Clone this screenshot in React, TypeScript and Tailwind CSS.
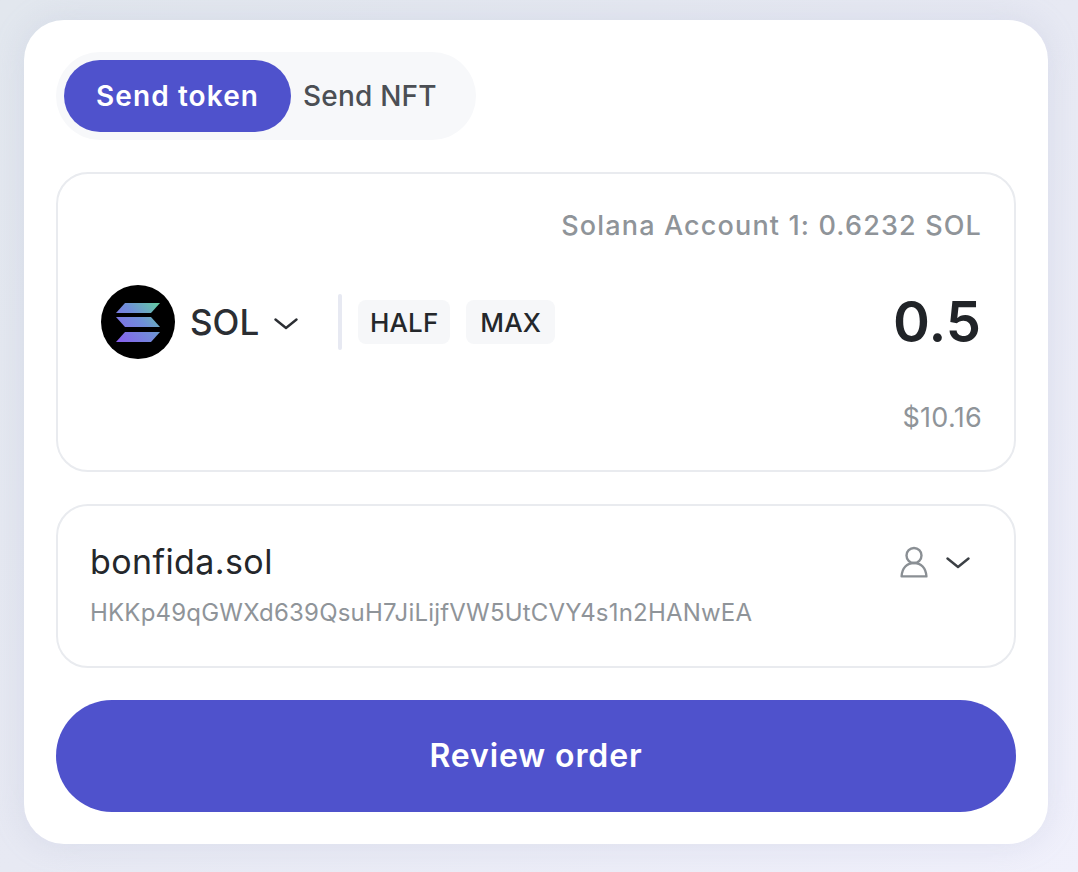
import { useId } from "react";

const FONT = "font-['Inter','Noto_Sans',sans-serif]";

function Chevron({ className }: { className: string }) {
  return (
    <svg viewBox="0 0 24 12" fill="none" className={className}>
      <path d="M1.5 1.5 12 10 22.5 1.5" stroke="currentColor" strokeWidth="2.4" strokeLinecap="round" strokeLinejoin="round" />
    </svg>
  );
}

function SolLogo() {
  const id = useId();
  return (
    <svg viewBox="0 0 74 74" className="w-[74px] h-[74px] shrink-0">
      <defs>
        <linearGradient id={id} x1="14" y1="58" x2="60" y2="16" gradientUnits="userSpaceOnUse">
          <stop offset="0" stopColor="#8a5cf0" />
          <stop offset="0.55" stopColor="#6f8fd8" />
          <stop offset="1" stopColor="#62d49a" />
        </linearGradient>
      </defs>
      <circle cx="37" cy="37" r="37" fill="#000" />
      <path d="M24 18H59L50 28H15Z" fill={`url(#${id})`} />
      <path d="M15 32H50L59 42H24Z" fill={`url(#${id})`} />
      <path d="M24 47H59L50 57H15Z" fill={`url(#${id})`} />
    </svg>
  );
}

function UserIcon() {
  return (
    <svg viewBox="0 0 28 32" fill="none" className="w-7 h-8 text-[#8a8f94]">
      <circle cx="14" cy="9.5" r="7.5" stroke="currentColor" strokeWidth="2.4" />
      <path d="M14 17C7 17 2 22 1.6 30.4H26.4C26 22 21 17 14 17Z" stroke="currentColor" strokeWidth="2.4" strokeLinejoin="round" />
    </svg>
  );
}

export default function App() {
  return (
    <div className={`${FONT} h-[872px] pl-6 pr-[30px] pt-5 bg-gradient-to-br from-[#e2e7ee] via-[#e7e9f3] to-[#f0f0fb]`}>
      <div className="h-[824px] bg-white rounded-[40px] p-8 flex flex-col gap-8 shadow-[0_0_32px_rgba(160,170,200,0.22)]">
        <div className="w-[420px] h-[88px] rounded-[44px] bg-[#f7f8fa] p-2 flex items-center gap-3">
          <button className="w-[227px] h-[72px] rounded-[36px] bg-[#4f52cc] text-white text-[28px] font-semibold tracking-[1.1px]">
            Send token
          </button>
          <button className="text-[#4b4f54] text-[28px] font-medium tracking-[0.2px]">Send NFT</button>
        </div>

        <div className="h-[300px] rounded-[32px] border-2 border-[#e9ebef] pt-[34px] pr-[32px] pl-[43px] flex flex-col">
          <div className="text-right text-[27px] leading-9 font-medium text-[#8f9499] tracking-[1.15px]">
            Solana Account 1: 0.6232 SOL
          </div>
          <div className="mt-[41px] h-[74px] flex items-center">
            <SolLogo />
            <span className="ml-[15px] text-[35px] font-medium text-[#2b2e33]">SOL</span>
            <Chevron className="ml-[15px] w-6 h-3 mt-1 text-[#2b2e33]" />
            <div className="ml-10 w-1 h-14 bg-[#e7e9f2] rounded-sm" />
            <div className="ml-4 flex gap-4">
              <button className="w-[92px] h-11 rounded-lg bg-[#f6f7f9] text-[#24272b] text-[26px] font-medium tracking-[0.2px]">
                HALF
              </button>
              <button className="w-[89px] h-11 rounded-lg bg-[#f6f7f9] text-[#24272b] text-[26px] font-medium tracking-[0.2px]">
                MAX
              </button>
            </div>
            <span className="ml-auto mr-[1px] text-[56px] font-semibold text-[#212428]">0.5</span>
          </div>
          <div className="mt-[41px] text-right text-[27px] leading-9 text-[#8f9499] tracking-[0.3px]">$10.16</div>
        </div>

        <div className="h-[164px] rounded-[32px] border-2 border-[#e9ebef] pl-8 pr-[44px] pt-[34px] flex justify-between">
          <div>
            <div className="text-[34px] leading-[44px] text-[#24272b] tracking-[0.4px]">bonfida.sol</div>
            <div className="mt-[13px] text-[24px] leading-8 text-[#8f9499] tracking-[0.2px]">
              HKKp49qGWXd639QsuH7JiLijfVW5UtCVY4s1n2HANwEA
            </div>
          </div>
          <div className="flex items-start gap-[18px] pt-[6px]">
            <UserIcon />
            <Chevron className="w-6 h-3 mt-[11px] text-[#3c4045]" />
          </div>
        </div>

        <button className="h-[112px] rounded-[56px] bg-[#4f52cc] text-white text-[32px] font-semibold tracking-[0.9px]">
          Review order
        </button>
      </div>
    </div>
  );
}
